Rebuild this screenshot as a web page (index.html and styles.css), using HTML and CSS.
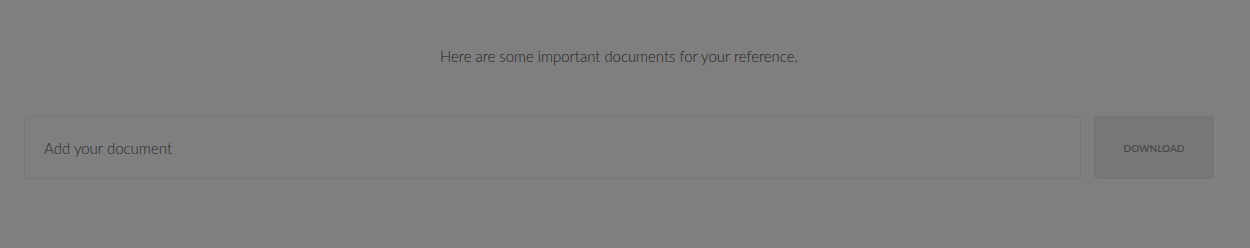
FILE: index.html
```html
<!DOCTYPE html>
<html>
<head>
<meta charset="utf-8">
<link rel="stylesheet" href="styles.css">
</head>
<body>
<div class="page">
  <p class="intro">Here are some important documents for your reference.</p>
  <form class="doc-form">
    <input class="doc-input" type="text" placeholder="Add your document">
    <button class="doc-button" type="button">DOWNLOAD</button>
  </form>
</div>
</body>
</html>
```
FILE: styles.css
```css
html, body {
  margin: 0;
  padding: 0;
  background: #7f7f7f;
}
body {
  font-family: "Lato", "Open Sans", sans-serif;
  color: #2a2a2a;
  width: 1250px;
  height: 248px;
  overflow: hidden;
}
.page {
  display: flex;
  flex-direction: column;
  padding: 46px 36px 0 24px;
}
.intro {
  margin: 0;
  text-align: center;
  font-size: 14.9px;
  font-weight: 300;
  line-height: 20px;
  color: #242424;
}
.doc-form {
  display: flex;
  gap: 13px;
  margin-top: 50px;
}
.doc-input {
  flex: 1;
  height: 63px;
  box-sizing: border-box;
  border: 1px solid #767676;
  border-radius: 4px;
  background: #7f7f7f;
  padding: 0 19px;
  font-family: inherit;
  font-size: 15px;
  font-weight: 300;
  color: #2b2b2b;
  outline: none;
}
.doc-input::placeholder {
  color: #2a2a2a;
}
.doc-button {
  width: 120px;
  height: 63px;
  box-sizing: border-box;
  border: 1px solid #747474;
  border-radius: 4px;
  background: #777777;
  font-family: inherit;
  font-size: 10px;
  font-weight: 600;
  color: #4a4a4a;
  letter-spacing: 0;
  padding: 0;
}
```
